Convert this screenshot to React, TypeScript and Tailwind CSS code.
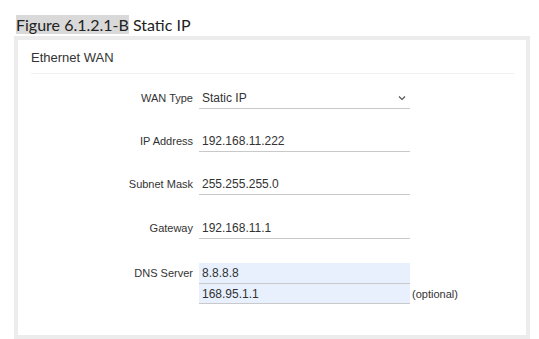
import React from "react";

function Field({ label, value, select }: { label: string; value: string; select?: boolean }) {
  return (
    <div className="flex items-center h-[21px]">
      <div className="w-[181px] pr-[6px] text-right text-[11px] text-[#333]">{label}</div>
      <div className="w-[211px] h-[21px] border-b border-[#c9c9c9] flex items-center justify-between pl-[3px] pr-[4px] text-[12px] text-[#333]">
        <span>{value}</span>
        {select && (
          <svg width="8" height="6" viewBox="0 0 8 6" className="text-[#555]">
            <path d="M1 1.5 L4 4.5 L7 1.5" fill="none" stroke="currentColor" strokeWidth="1.2" />
          </svg>
        )}
      </div>
    </div>
  );
}

export default function App() {
  return (
    <div className="w-[539px] h-[339px] bg-white overflow-hidden font-[family-name:'Liberation_Sans',Arial,sans-serif]">
      <div className="pt-[14px] pl-[16px] h-[36px] text-[16px] leading-[22px] text-[#222] font-[family-name:'Lato','Open_Sans',sans-serif]">
        <span className="bg-[#d9d9d9]">Figure 6.1.2.1-B</span> Static IP
      </div>
      <div className="ml-[14px] w-[516px] h-[303px] border-4 border-[#ececec] bg-white">
        <div className="h-[33px] flex items-center pl-[13px] pt-[2px] text-[13px] text-[#333]">
          Ethernet WAN
        </div>
        <div className="ml-[13px] mr-[12px] h-px bg-[#f0f0f0]" />
        <div className="flex flex-col pt-[14px]">
          <Field label="WAN Type" value="Static IP" select />
          <div className="h-[22px]" />
          <Field label="IP Address" value="192.168.11.222" />
          <div className="h-[22px]" />
          <Field label="Subnet Mask" value="255.255.255.0" />
          <div className="h-[23px]" />
          <Field label="Gateway" value="192.168.11.1" />
          <div className="h-[24px]" />
          <div className="flex">
            <div className="w-[181px] pr-[6px] text-right text-[11px] text-[#333] h-[21px] flex items-center justify-end">
              DNS Server
            </div>
            <div className="flex flex-col">
              <div className="w-[211px] h-[21px] bg-[#e8f0fe] border-b border-[#c9c9c9] flex items-center pl-[3px] text-[12px] text-[#333]">
                8.8.8.8
              </div>
              <div className="flex items-center">
                <div className="w-[211px] h-[20px] bg-[#e8f0fe] border-b border-[#c9c9c9] flex items-center pl-[3px] text-[12px] text-[#333]">
                  168.95.1.1
                </div>
                <span className="ml-[2px] text-[11px] text-[#333]">(optional)</span>
              </div>
            </div>
          </div>
        </div>
      </div>
    </div>
  );
}
